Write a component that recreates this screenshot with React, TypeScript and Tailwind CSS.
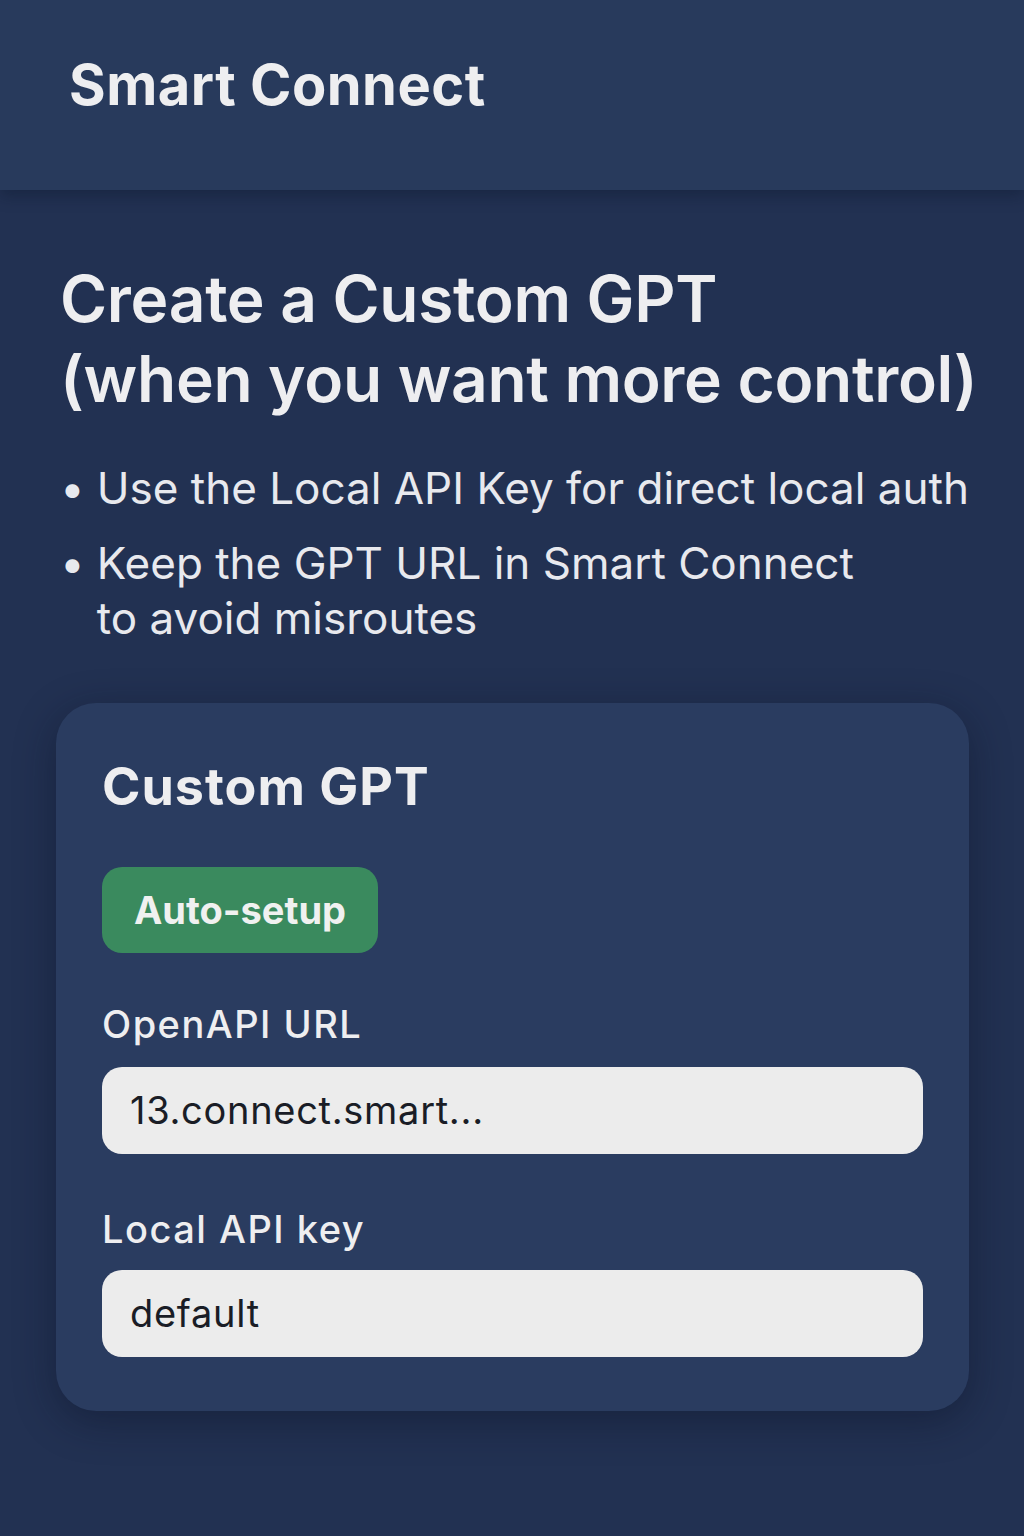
export default function App() {
  return (
    <div className="min-h-[1536px] w-full bg-[#223152] font-['Inter','Noto_Sans',sans-serif] text-[#eeeef0]">
      <header className="flex h-[190px] items-center bg-[#283a5c] px-[69px] shadow-[0_6px_14px_rgba(10,20,40,0.35)]">
        <h1 className="pb-[20px] text-[56px] font-bold leading-none tracking-[0.5px]">Smart Connect</h1>
      </header>

      <main className="px-[60px] pt-[69px]">
        <h2 className="whitespace-nowrap text-[64px] font-semibold leading-[80px] tracking-[-0.3px]">
          Create a Custom GPT
          <br />
          (when you want more control)
        </h2>

        <ul className="mt-[42px] flex flex-col gap-[20px] whitespace-nowrap text-[44px] leading-[55px] text-[#e8e9ee]">
          <li className="flex gap-[12px]">
            <span>•</span>
            <span>Use the Local API Key for direct local auth</span>
          </li>
          <li className="flex gap-[12px]">
            <span>•</span>
            <span>
              Keep the GPT URL in Smart Connect
              <br />
              to avoid misroutes
            </span>
          </li>
        </ul>

        <section className="mt-[57px] -ml-[4px] w-[913px] rounded-[40px] bg-[#2a3c60] px-[46px] pt-[52px] pb-[54px] shadow-[0_10px_40px_rgba(10,18,38,0.45)]">
          <h3 className="text-[52px] font-bold leading-[64px] tracking-[1px]">Custom GPT</h3>

          <button className="mt-[48px] flex h-[86px] w-[276px] items-center justify-center rounded-[20px] bg-[#3a8a5e] text-[38px] font-bold text-[#f0f1f0]">
            Auto-setup
          </button>

          <label className="mt-[46px] block text-[38px] font-medium leading-[50px] tracking-[1.5px]">OpenAPI URL</label>
          <div className="mt-[18px] flex h-[87px] items-center rounded-[20px] bg-[#ececec] px-[28px] text-[38px] tracking-[0.7px] text-[#1a1d26]">
            13.connect.smart...
          </div>

          <label className="mt-[50px] block text-[38px] font-medium leading-[50px] tracking-[1.5px]">Local API key</label>
          <div className="mt-[16px] flex h-[87px] items-center rounded-[20px] bg-[#ececec] px-[28px] text-[38px] tracking-[0.7px] text-[#1a1d26]">
            default
          </div>
        </section>
      </main>
    </div>
  );
}
